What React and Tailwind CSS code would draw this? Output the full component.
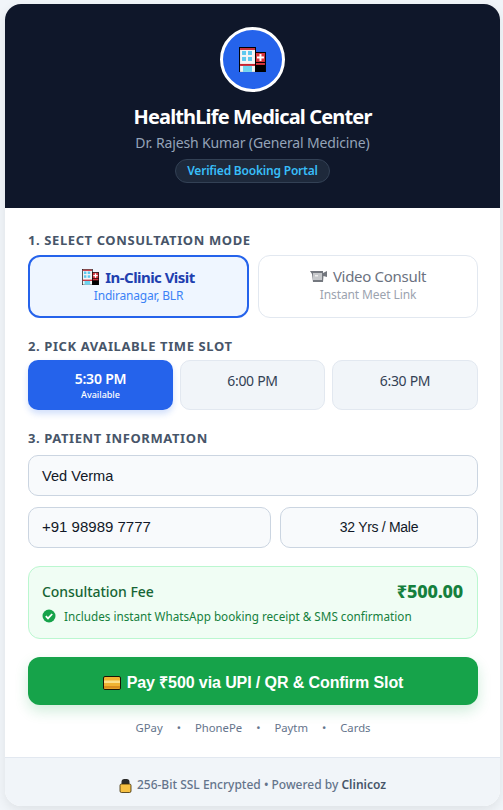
const Hospital = ({ size = 28, className = "" }) => (
  <svg width={size} height={size * 0.96} viewBox="0 0 27 26" className={className}>
    <rect x="0" y="0" width="17" height="26" fill="#000" />
    <rect x="1" y="1" width="15" height="24" fill="#f4f4f4" />
    <rect x="1" y="1" width="15" height="2" fill="#c8323c" />
    <rect x="3" y="4" width="4" height="4" fill="#5cc8ee" />
    <rect x="9" y="4" width="4" height="4" fill="#5cc8ee" />
    <rect x="3" y="10" width="4" height="4" fill="#5cc8ee" />
    <rect x="9" y="10" width="4" height="4" fill="#5cc8ee" />
    <rect x="1" y="17" width="15" height="2" fill="#c8202c" />
    <rect x="4" y="19" width="9" height="6" fill="#6fd3ee" />
    <rect x="16" y="5" width="11" height="21" fill="#000" />
    <rect x="17" y="6" width="9" height="9" fill="#d8343c" />
    <rect x="20.5" y="7" width="2" height="7" fill="#fff" />
    <rect x="18" y="9.5" width="7" height="2" fill="#fff" />
    <rect x="17" y="16" width="9" height="2" fill="#d8343c" />
  </svg>
);

const Camera = () => (
  <svg width="17" height="13" viewBox="0 0 17 13">
    <path d="M0 1 H13 V3 L17 1 V7 L13.5 6 L13 12 H3 L2 4 Z" fill="#74787f" />
    <rect x="3" y="3" width="9" height="7" fill="#c6c8cb" />
    <rect x="5" y="5" width="3" height="1.5" fill="#eeeeee" />
  </svg>
);

const CardIcon = () => (
  <svg width="18" height="14" viewBox="0 0 18 14">
    <rect x="0.5" y="0.5" width="17" height="13" rx="1.5" fill="#f0b432" stroke="#1a1405" />
    <rect x="1" y="4.5" width="16" height="2.5" fill="#fbe08a" />
    <rect x="1" y="10" width="16" height="2.5" fill="#d98f1f" />
  </svg>
);

const Lock = () => (
  <svg width="13" height="15" viewBox="0 0 13 15">
    <rect x="2.5" y="1" width="8" height="7" rx="3" fill="#2a2a2a" />
    <rect x="1" y="6" width="11" height="8.5" rx="1.5" fill="#f5bf42" stroke="#3a2a05" strokeWidth="0.8" />
  </svg>
);

const Check = () => (
  <svg width="14" height="14" viewBox="0 0 14 14">
    <circle cx="7" cy="7" r="6.5" fill="#16a34a" />
    <path d="M3.8 7.2 L6 9.4 L10.2 5" fill="none" stroke="#fff" strokeWidth="1.8" />
  </svg>
);

const Label = ({ children, className = "" }) => (
  <div className={`text-[13px] leading-[18px] font-bold tracking-[0.6px] text-[#475569] uppercase ${className}`}>{children}</div>
);

const Field = ({ children, className = "" }) => (
  <div className={`h-[41px] flex items-center rounded-[10px] border border-[#cbd5e1] bg-[#f8fafc] text-[#111827] font-['Liberation_Sans',Arial,sans-serif] ${className}`}>
    {children}
  </div>
);

export default function App() {
  return (
    <div className="min-h-[810px] bg-[#f1f5f9] pt-[4px] pl-[5px] pr-[3px] font-['Noto_Sans',sans-serif]">
      <div className="h-[802px] flex flex-col rounded-[16px] overflow-hidden bg-white shadow-[0_4px_12px_rgba(0,0,0,0.08)]">
        <header className="h-[204px] shrink-0 bg-[#0f172a] flex flex-col items-center pt-[23px]">
          <div className="w-[65px] h-[65px] rounded-full border-[3px] border-white bg-[#2563eb] flex items-center justify-center">
            <Hospital size={27} />
          </div>
          <h1 className="mt-[11px] text-[20px] leading-[28px] font-bold tracking-[-0.84px] text-white">HealthLife Medical Center</h1>
          <p className="mt-[2px] text-[14px] leading-[20px] tracking-[-0.14px] text-[#94a3b8]">Dr. Rajesh Kumar (General Medicine)</p>
          <span className="mt-[6px] h-[24px] w-[155px] flex items-center justify-center rounded-full border border-[#334155] bg-[#1e293b] text-[12px] font-semibold tracking-[-0.2px] text-[#38bdf8]">
            Verified Booking Portal
          </span>
        </header>

        <main className="flex-1 pl-[23px] pr-[22px] pt-[23px] flex flex-col">
          <Label>1. Select Consultation Mode</Label>
          <div className="mt-[6px] flex gap-[9px]">
            <div className="w-[221px] h-[63px] rounded-[12px] border-2 border-[#2563eb] bg-[#eff6ff] flex flex-col items-center justify-center pb-[2px]">
              <div className="flex items-center gap-[6px] text-[15px] leading-[20px] font-bold tracking-[-0.55px] text-[#1e40af]">
                <Hospital size={17} />
                <span>In-Clinic Visit</span>
              </div>
              <div className="text-[12px] leading-[16px] tracking-[-0.2px] mt-[1px] text-[#3b82f6]">Indiranagar, BLR</div>
            </div>
            <div className="flex-1 h-[63px] rounded-[12px] border border-[#e2e8f0] bg-white flex flex-col items-center justify-center pb-[4px]">
              <div className="flex items-center gap-[6px] text-[15px] leading-[20px] tracking-[-0.3px] text-[#6b7280]">
                <Camera />
                <span>Video Consult</span>
              </div>
              <div className="text-[12px] leading-[16px] tracking-[-0.1px] mt-[1px] text-[#9ca3af]">Instant Meet Link</div>
            </div>
          </div>

          <Label className="mt-[19px]">2. Pick Available Time Slot</Label>
          <div className="mt-[5px] flex gap-[7px]">
            <div className="w-[145px] h-[50px] rounded-[10px] bg-[#2563eb] text-white flex flex-col items-center justify-center shadow-[0_4px_6px_rgba(37,99,235,0.2)]">
              <div className="text-[14px] leading-[16px] font-semibold tracking-[-0.2px]">5:30 PM</div>
              <div className="mt-[2px] text-[9px] leading-[11px] font-medium">Available</div>
            </div>
            <div className="w-[145px] h-[50px] rounded-[10px] border border-[#e2e8f0] bg-[#f1f5f9] text-[#334155] text-[14px] tracking-[-0.3px] flex items-center justify-center pb-[10px]">6:00 PM</div>
            <div className="flex-1 h-[50px] rounded-[10px] border border-[#e2e8f0] bg-[#f1f5f9] text-[#334155] text-[14px] tracking-[-0.3px] flex items-center justify-center pb-[10px]">6:30 PM</div>
          </div>

          <Label className="mt-[19px]">3. Patient Information</Label>
          <Field className="mt-[8px] pl-[13px] pt-[2px] text-[14.6px]">Ved Verma</Field>
          <div className="mt-[11px] flex gap-[9px]">
            <Field className="w-[243px] pl-[13px] text-[15px]">+91 98989 7777</Field>
            <Field className="flex-1 justify-center text-[14px] tracking-[-0.3px]">32 Yrs / Male</Field>
          </div>

          <div className="mt-[18px] h-[73px] rounded-[12px] border border-[#bbf7d0] bg-[#f0fdf4] pl-[13px] pr-[14px] pt-[12px]">
            <div className="flex items-center justify-between h-[24px]">
              <span className="text-[14px] font-medium tracking-[-0.05px] text-[#166534]">Consultation Fee</span>
              <span className="text-[18px] font-extrabold tracking-[-0.2px] text-[#15803d]">₹500.00</span>
            </div>
            <div className="mt-[5px] flex items-center gap-[8px] text-[11.7px] leading-[16px] text-[#15803d]">
              <Check />
              <span>Includes instant WhatsApp booking receipt &amp; SMS confirmation</span>
            </div>
          </div>

          <button className="mt-[18px] h-[48px] w-full rounded-[12px] bg-[#16a34a] text-white text-[16px] tracking-[-0.1px] font-bold font-['Liberation_Sans',Arial,sans-serif] flex items-center justify-center gap-[6px] pt-[3px] shadow-[0_6px_14px_rgba(22,163,74,0.2)]">
            <CardIcon />
            <span>Pay ₹500 via UPI / QR &amp; Confirm Slot</span>
          </button>

          <div className="mt-[14px] flex items-center justify-center gap-[14px] text-[11.3px] leading-[18px] text-[#64748b]">
            <span>GPay</span><span>•</span><span>PhonePe</span><span>•</span><span>Paytm</span><span>•</span><span>Cards</span>
          </div>
        </main>

        <footer className="h-[49px] shrink-0 border-t border-[#e2e8f0] bg-[#f1f5f9] flex items-center justify-center gap-[5px] pt-[6px] text-[12px] font-medium text-[#64748b]">
          <Lock />
          <span>256-Bit SSL Encrypted • Powered by <b className="font-semibold text-[#475569]">Clinicoz</b></span>
        </footer>
      </div>
    </div>
  );
}
